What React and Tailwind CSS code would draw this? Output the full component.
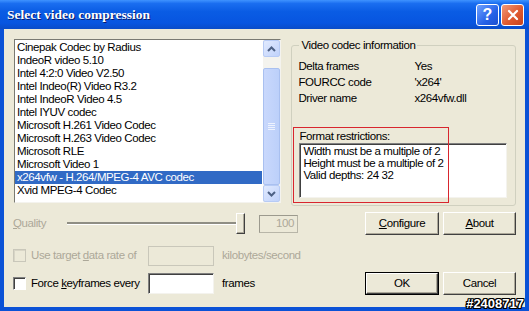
import React from "react";

const items = [
  "Cinepak Codec by Radius",
  "IndeoR video 5.10",
  "Intel 4:2:0 Video V2.50",
  "Intel Indeo(R) Video R3.2",
  "Intel IndeoR Video 4.5",
  "Intel IYUV codec",
  "Microsoft H.261 Video Codec",
  "Microsoft H.263 Video Codec",
  "Microsoft RLE",
  "Microsoft Video 1",
  "x264vfw - H.264/MPEG-4 AVC codec",
  "Xvid MPEG-4 Codec",
];

function Btn({ children, def, w }) {
  return (
    <div
      className={
        def
          ? "h-[23px] border border-black flex"
          : "h-[23px] flex"
      }
      style={{ width: w }}
    >
      <div className="flex-1 flex items-center justify-center border-t border-l border-t-white border-l-white border-b border-r border-b-[#404040] border-r-[#404040] shadow-[inset_-1px_-1px_0_#aca899] bg-[#ece9d8] leading-none">
        {children}
      </div>
    </div>
  );
}

function Arrow({ up }) {
  return (
    <svg width="9" height="6" viewBox="0 0 9 6">
      {up ? (
        <path d="M1 5 L4.5 1.5 L8 5" stroke="#4d6185" strokeWidth="2" fill="none" />
      ) : (
        <path d="M1 1 L4.5 4.5 L8 1" stroke="#4d6185" strokeWidth="2" fill="none" />
      )}
    </svg>
  );
}

function Check({ disabled }) {
  return (
    <div
      className={
        disabled
          ? "w-[13px] h-[13px] border border-[#c9c7ba] bg-[#ece9d8] shadow-[inset_1px_1px_0_#d8d5c6]"
          : "w-[13px] h-[13px] border-t border-l border-t-[#808080] border-l-[#808080] border-b border-r border-b-white border-r-white bg-white shadow-[inset_1px_1px_0_#404040]"
      }
    />
  );
}

export default function App() {
  return (
    <div className="relative w-[529px] h-[311px] flex flex-col overflow-hidden bg-[#0b52d6] font-['Liberation_Sans',Arial,sans-serif] text-[11.5px] text-black tracking-[-0.4px]">
      {/* Title bar */}
      <div className="h-[29px] shrink-0 flex items-center pl-[7px] pr-[5px] bg-[linear-gradient(to_bottom,#3f93ff_0%,#1a6ef0_12%,#0a5ce4_40%,#0755e0_80%,#0a4cc8_100%)]">
        <span className="font-['Liberation_Serif',serif] font-bold text-[13.5px] tracking-[0px] text-white [text-shadow:1px_1px_0_#0a1a6a] pt-[1px]">
          Select video compression
        </span>
        <div className="ml-auto flex gap-[2px] mt-[1px]">
          <div className="w-[23px] h-[22px] rounded-[3px] border border-white bg-[linear-gradient(135deg,#6ea2ff,#2662e8_60%,#1c4fd0)] flex items-center justify-center text-white font-bold text-[16px] font-['Liberation_Sans',sans-serif] tracking-normal leading-none">
            ?
          </div>
          <div className="w-[23px] h-[22px] rounded-[3px] border border-white bg-[linear-gradient(135deg,#f09a7a,#e05a30_55%,#c8431c)] flex items-center justify-center">
            <svg width="12" height="12" viewBox="0 0 12 12">
              <path d="M2 2 L10 10 M10 2 L2 10" stroke="white" strokeWidth="2.2" strokeLinecap="round" />
            </svg>
          </div>
        </div>
      </div>

      {/* Body */}
      <div className="flex-1 ml-[4px] mr-[4px] mb-[4px] bg-[#ece9d8] flex flex-col pl-[9px] pr-[9px]">
        {/* Top row */}
        <div className="flex items-start pt-[9px] pl-[1px]">
          {/* Listbox */}
          <div className="mt-[1px] w-[268px] h-[164px] bg-white border border-t-[#7a7a72] border-l-[#7a7a72] border-b-[#f4f3ee] border-r-[#f4f3ee] flex">
            <div className="flex-1 pt-[1px] leading-[13px]">
              {items.map((t, i) => (
                <div
                  key={t}
                  className={
                    i === 10
                      ? "h-[13px] pl-[2px] bg-[#316ac5] text-white whitespace-nowrap mr-[1px]"
                      : "h-[13px] pl-[2px] whitespace-nowrap"
                  }
                >
                  {t}
                </div>
              ))}
            </div>
            {/* Scrollbar */}
            <div className="w-[17px] flex flex-col bg-[#f4f3ee]">
              <div className="h-[17px] rounded-[2px] border border-[#b7cbf5] bg-[linear-gradient(135deg,#e1eafe,#c0d2fb)] flex items-center justify-center">
                <Arrow up />
              </div>
              <div className="h-[11px]" />
              <div className="h-[117px] rounded-[2px] border border-[#a9c0f0] bg-[linear-gradient(to_right,#c9d8fc,#bcd0fa)] flex flex-col items-center justify-center gap-[1px]">
                <div className="w-[7px] h-[1px] bg-[#eef3fe]" />
                <div className="w-[7px] h-[1px] bg-[#eef3fe]" />
                <div className="w-[7px] h-[1px] bg-[#eef3fe]" />
                <div className="w-[7px] h-[1px] bg-[#eef3fe]" />
              </div>
              <div className="h-[17px] rounded-[2px] border border-[#b7cbf5] bg-[linear-gradient(135deg,#e1eafe,#c0d2fb)] flex items-center justify-center">
                <Arrow />
              </div>
            </div>
          </div>

          {/* Group box */}
          <fieldset className="ml-[10px] w-[225px] border border-[#d0d0bf] rounded-[3px] pl-[6px] pt-[6px] pb-[7px]">
            <legend className="ml-[1px] px-[2px] leading-[14px] text-black">
              Video codec information
            </legend>
            <div className="grid grid-cols-[116px_1fr] leading-[16px]">
              <div>Delta frames</div>
              <div>Yes</div>
              <div>FOURCC code</div>
              <div>'x264'</div>
              <div>Driver name</div>
              <div>x264vfw.dll</div>
            </div>
            <div className="relative mt-[23px]">
              <div className="leading-[14px] pl-[1px]">Format restrictions:</div>
              <div className="ml-[1px] w-[208px] h-[55px] bg-white border-t border-l border-t-[#808080] border-l-[#808080] border-b border-r border-b-[#f4f3ee] border-r-[#f4f3ee] shadow-[inset_1px_1px_0_#404040] pl-[3px] pt-[1px] leading-[12px]">
                <div>Width must be a multiple of 2</div>
                <div>Height must be a multiple of 2</div>
                <div>Valid depths: 24 32</div>
              </div>
              <div className="absolute left-[-5px] top-[-2px] w-[156px] h-[76px] border border-[#d8262e] pointer-events-none" />
            </div>
          </fieldset>
        </div>

        {/* Quality row */}
        <div className="mt-[6px] h-[23px] flex items-center">
          <div className="w-[54px] text-[#aca899]">
            <span className="underline">Q</span>uality
          </div>
          <div className="w-[178px] h-[23px] flex items-center">
            <div className="flex-1 h-[3px] bg-[#8f8e84] border-b border-b-white" />
            <div className="w-[9px] h-[21px] bg-[#ece9d8] border-t border-l border-t-white border-l-white border-b border-r border-b-[#404040] border-r-[#404040] shadow-[inset_-1px_-1px_0_#aca899]" />
          </div>
          <div className="ml-[14px] w-[39px] h-[18px] border border-[#b8b6a8] border-t-[#9c9a8e] border-l-[#9c9a8e] flex items-center justify-end pr-[3px] text-[#aca899]">
            100
          </div>
          <div className="ml-auto flex gap-[4px]">
            <Btn w={74}>
              <span>
                <span className="underline">C</span>onfigure
              </span>
            </Btn>
            <Btn w={73}>
              <span>
                <span className="underline">A</span>bout
              </span>
            </Btn>
          </div>
        </div>

        {/* Target data rate row */}
        <div className="mt-[10px] h-[21px] flex items-center">
          <Check disabled />
          <div className="ml-[5px] w-[117px] text-[#aca899]">
            Use target <span className="underline">d</span>ata rate of
          </div>
          <div className="w-[66px] h-[20px] border border-[#c9c7ba] bg-[#ece9d8]" />
          <div className="ml-[8px] text-[#aca899]">kilobytes/second</div>
        </div>

        {/* Keyframes row */}
        <div className="mt-[6px] h-[23px] flex items-center">
          <Check />
          <div className="ml-[5px] w-[117px]">
            Force <span className="underline">k</span>eyframes every
          </div>
          <div className="w-[66px] h-[21px] bg-white border-t border-l border-t-[#808080] border-l-[#808080] border-b border-r border-b-[#f4f3ee] border-r-[#f4f3ee] shadow-[inset_1px_1px_0_#404040]" />
          <div className="ml-[8px]">frames</div>
          <div className="ml-auto flex gap-[4px]">
            <Btn w={74} def>
              OK
            </Btn>
            <Btn w={73}>Cancel</Btn>
          </div>
        </div>
      </div>

      {/* Watermark */}
      <div className="absolute right-[5px] bottom-[1px] font-['Liberation_Sans',sans-serif] font-bold text-[13px] tracking-[0px] leading-[13px] text-white [text-shadow:1px_0_0_#000,-1px_0_0_#000,0_1px_0_#000,0_-1px_0_#000,1px_1px_0_#000,-1px_-1px_0_#000,1px_-1px_0_#000,-1px_1px_0_#000]">
        #2408717
      </div>
    </div>
  );
}
